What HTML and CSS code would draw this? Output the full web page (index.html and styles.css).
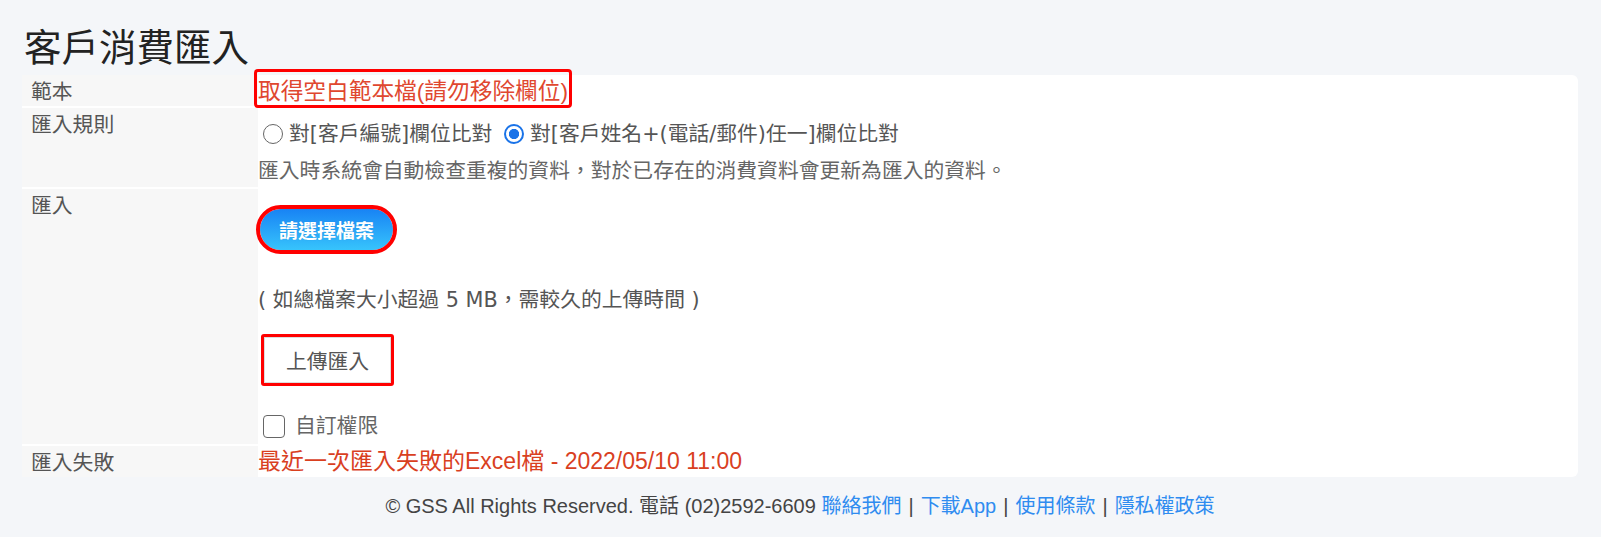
FILE: index.html
```html
<!DOCTYPE html>
<html lang="zh-Hant">
<head>
<meta charset="utf-8">
<title>客戶消費匯入</title>
<link rel="stylesheet" href="styles.css">
</head>
<body>
<div class="page">
  <h1 class="title">客戶消費匯入</h1>
  <div class="panel">
    <div class="lbl">範本</div>
    <div class="val row-tpl"><a class="tpl hl" href="#">取得空白範本檔(請勿移除欄位)</a></div>

    <div class="lbl">匯入規則</div>
    <div class="val row-rules">
      <div class="opts">
        <label class="opt"><input type="radio" name="rule" class="rd">對[客戶編號]欄位比對</label>
        <label class="opt"><input type="radio" name="rule" class="rd" checked>對[客戶姓名+(電話/郵件)任一]欄位比對</label>
      </div>
      <div class="desc">匯入時系統會自動檢查重複的資料，對於已存在的消費資料會更新為匯入的資料。</div>
    </div>

    <div class="lbl">匯入</div>
    <div class="val row-import">
      <div><span class="pick-wrap hl-pill"><button class="pick" type="button">請選擇檔案</button></span></div>
      <div class="note">( 如總檔案大小超過 5 MB，需較久的上傳時間 )</div>
      <div><span class="up-wrap hl-box"><button class="upload" type="button">上傳匯入</button></span></div>
      <label class="chk-line"><input type="checkbox" class="chk">自訂權限</label>
    </div>

    <div class="lbl">匯入失敗</div>
    <div class="val row-fail"><a class="fail" href="#">最近一次匯入失敗的Excel檔 - 2022/05/10 11:00</a></div>
  </div>
  <footer class="foot">© GSS All Rights Reserved. 電話 (02)2592-6609 <a href="#">聯絡我們</a><span class="sep">|</span><a href="#">下載App</a><span class="sep">|</span><a href="#">使用條款</a><span class="sep">|</span><a href="#">隱私權政策</a></footer>
</div>
</body>
</html>
```

FILE: styles.css
```css
* { box-sizing: border-box; }

body {
  margin: 0;
  background: #f4f6f9;
  font-family: "DejaVu Sans", "Noto Sans CJK TC", sans-serif;
  font-weight: 400;
  color: #555;
}

.page {
  padding: 19px 23px 0 22px;
}

.title {
  margin: 0 0 4px 2px;
  font: 400 37.5px/52px "Noto Sans CJK TC", sans-serif;
  color: #222;
}

.panel {
  display: grid;
  grid-template-columns: 236px 1fr;
  row-gap: 2px;
  background: #fff;
  border-radius: 6px;
}

.lbl {
  background: #f7f7f7;
  padding: 3px 9px 0;
  font-size: 20.8px;
  line-height: 28px;
  color: #555;
}

.val {
  font-size: 20.8px;
  line-height: 31px;
}

/* row 1 */
.row-tpl { height: 31px; }
.tpl {
  display: inline-block;
  font-family: "Liberation Sans", "Noto Sans CJK TC", sans-serif;
  font-size: 22.7px;
  line-height: 32px;
  color: #e0472f;
  text-decoration: none;
}
.hl { position: relative; }
.hl::after {
  content: "";
  position: absolute;
  top: -6px; bottom: -1px; left: -4px; right: -4px;
  border: 3px solid #f00;
  border-radius: 4px;
}

/* row 2 */
.row-rules { padding-top: 11px; }
.opts { color: #555; }
.opt { margin-right: 0; }
.rd {
  appearance: none;
  -webkit-appearance: none;
  width: 20px;
  height: 20px;
  margin: 0 6px 0 5px;
  border: 1.5px solid #666;
  border-radius: 50%;
  vertical-align: -3px;
  background: #fff;
}
.rd:checked {
  border: 2px solid #1a73e8;
  background: radial-gradient(circle, #1a73e8 0 4.8px, #fff 5.4px);
}
.desc {
  margin-top: 6px;
  color: #666;
}

/* row 3 */
.row-import { padding: 20px 0 2px; }
.pick-wrap {
  position: relative;
  display: inline-block;
  margin-left: 2px;
  vertical-align: top;
}
.pick {
  display: block;
  height: 41px;
  padding: 0 19px;
  border: 0;
  border-radius: 21px;
  background: linear-gradient(#1883f4, #37c4fc);
  color: #fff;
  font: 700 19px/41px "Noto Sans CJK TC", sans-serif;
  text-shadow: 0 0 1px rgba(0,0,0,.15);
}
.hl-pill::after {
  content: "";
  position: absolute;
  inset: -4px;
  border: 4px solid #f00;
  border-radius: 26px;
}
.note {
  margin-top: 35px;
  color: #555;
}
.up-wrap {
  position: relative;
  display: inline-block;
  margin: 21px 0 0 6px;
  vertical-align: top;
}
.upload {
  display: block;
  width: 127px;
  height: 46px;
  border: 1px solid #ddd;
  background: #fff;
  color: #555;
  font: 400 20.8px/44px "Noto Sans CJK TC", sans-serif;
  padding: 0;
}
.hl-box::after {
  content: "";
  position: absolute;
  inset: -3px;
  border: 3px solid #f00;
  border-radius: 3px;
}
.chk-line {
  display: block;
  margin-top: 28px;
  color: #666;
}
.chk {
  appearance: none;
  -webkit-appearance: none;
  width: 22px;
  height: 23px;
  margin: 0 10px 0 5px;
  border: 1.5px solid #666;
  border-radius: 4px;
  vertical-align: -5px;
  background: #fff;
}

/* row 4 */
.row-fail { line-height: 30px; }
.fail {
  font-family: "Liberation Sans", "Noto Sans CJK TC", sans-serif;
  font-size: 23px;
  color: #d9401f;
  text-decoration: none;
}

/* footer */
.foot {
  margin-top: 14px;
  text-align: center;
  font: 400 20px/30px "Liberation Sans", "Noto Sans CJK TC", sans-serif;
  color: #444;
}
.foot a {
  color: #2f8cf0;
  text-decoration: none;
}
.sep {
  margin: 0 7px;
}
```
